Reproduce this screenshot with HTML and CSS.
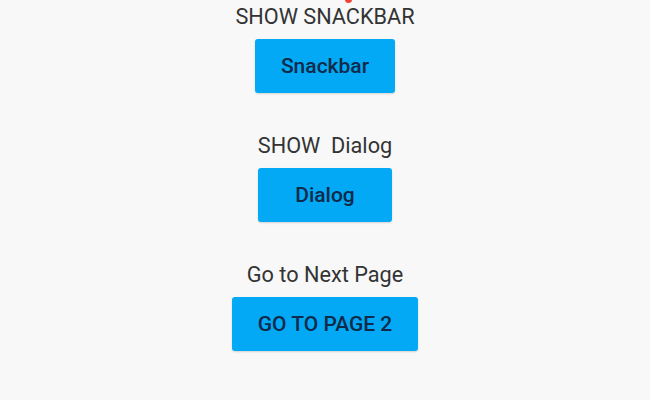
FILE: index.html
```html
<!DOCTYPE html>
<html>
<head>
<meta charset="utf-8">
<link rel="stylesheet" href="styles.css">
</head>
<body>
<div class="dot"></div>
<main class="stack">
  <section class="group">
    <div class="label">SHOW SNACKBAR</div>
    <button class="btn">Snackbar</button>
  </section>
  <section class="group">
    <div class="label">SHOW&nbsp; Dialog</div>
    <button class="btn btn-wide">Dialog</button>
  </section>
  <section class="group">
    <div class="label">Go to Next Page</div>
    <button class="btn">GO TO PAGE 2</button>
  </section>
</main>
</body>
</html>
```
FILE: styles.css
```css
html, body {
  margin: 0;
  padding: 0;
  width: 650px;
  height: 400px;
  background: #f8f8f8;
  overflow: hidden;
  font-family: Roboto, "Liberation Sans", sans-serif;
}
body { position: relative; }
.dot {
  position: absolute;
  left: 345px;
  top: -4px;
  width: 7px;
  height: 7px;
  border-radius: 50%;
  background: #f44336;
}
.stack {
  display: flex;
  flex-direction: column;
  align-items: center;
  gap: 41px;
  padding-top: 5px;
}
.group {
  display: flex;
  flex-direction: column;
  align-items: center;
  gap: 10px;
}
.label {
  font-size: 21.7px;
  line-height: 24px;
  color: #333333;
}
.btn {
  height: 54px;
  padding: 0 26px;
  border: none;
  border-radius: 3px;
  background: #03a9f4;
  color: #0f2a4a;
  font-family: Roboto, "Liberation Sans", sans-serif;
  font-size: 21px;
  font-weight: 500;
  box-shadow: 0 1px 2px rgba(0,0,0,0.15);
}
.btn-wide {
  min-width: 134px;
}
```
